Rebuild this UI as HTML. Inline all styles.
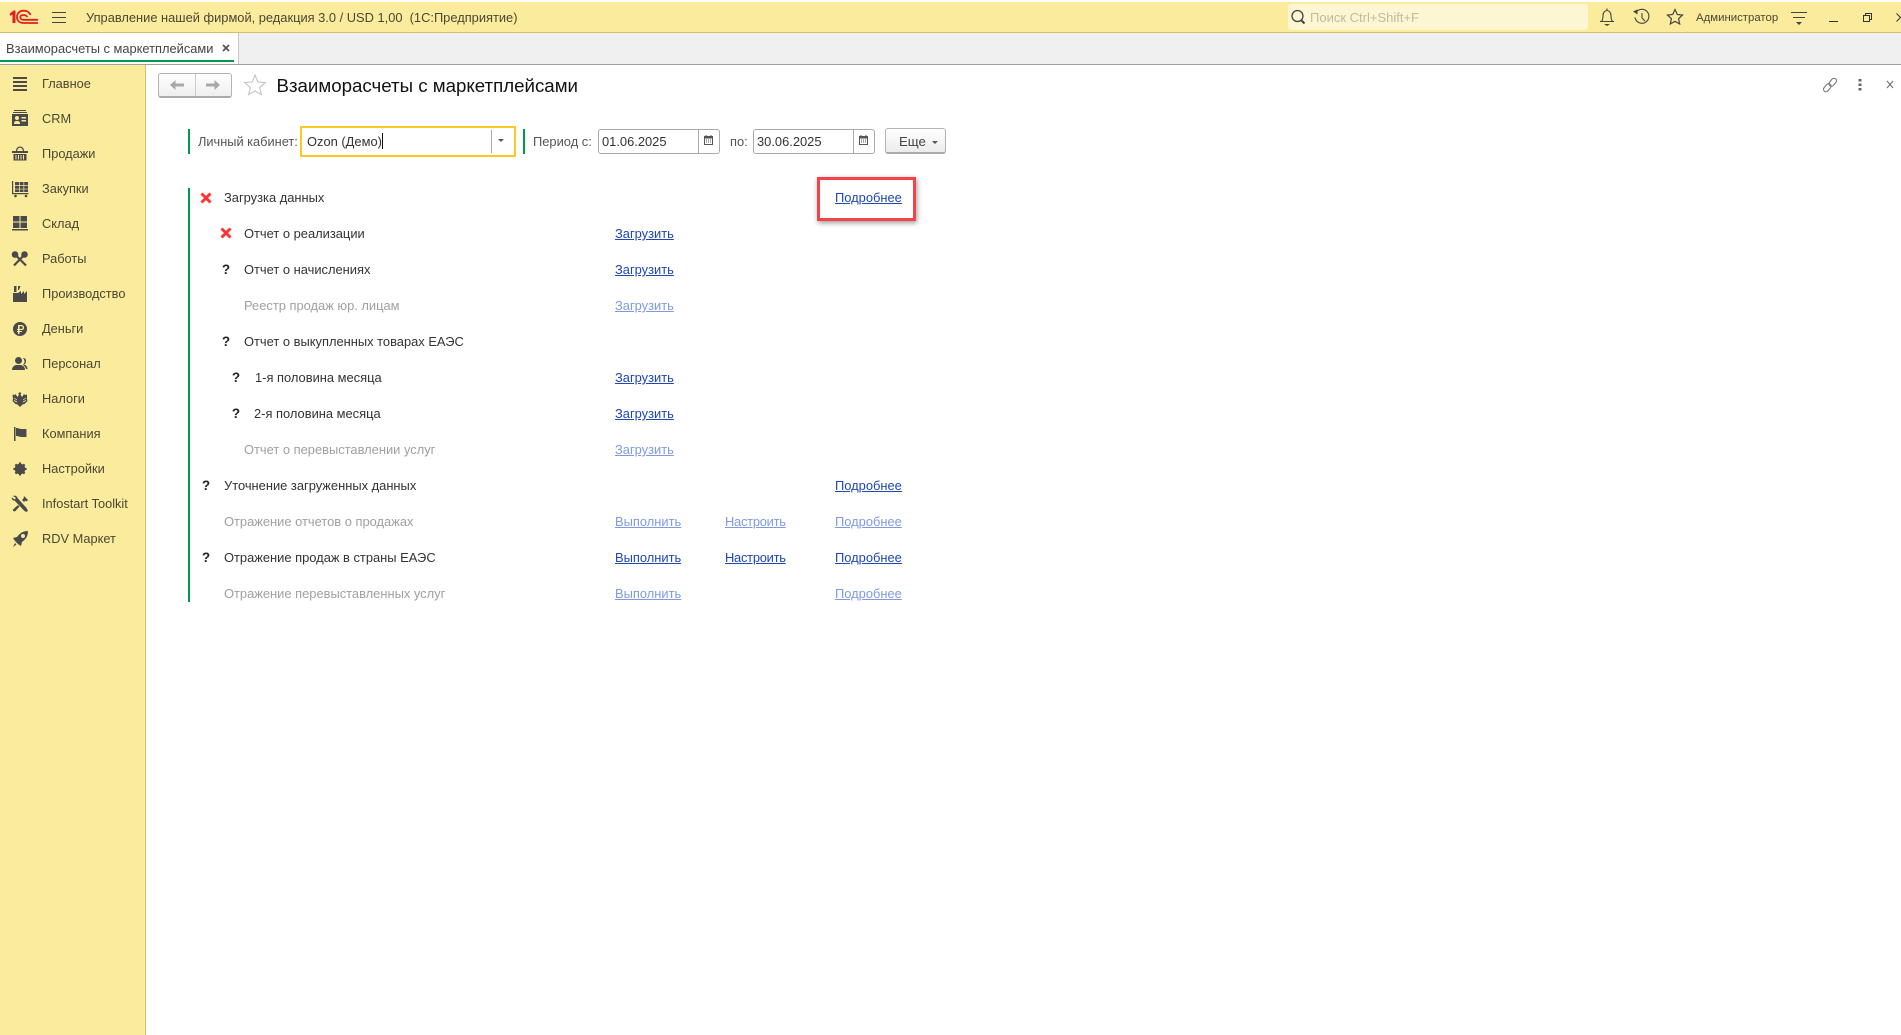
<!DOCTYPE html>
<html lang="ru"><head><meta charset="utf-8"><title>Взаиморасчеты с маркетплейсами</title>
<style>
html,body{margin:0;padding:0;background:#fff}
body{width:1901px;height:1035px;position:relative;overflow:hidden;font-family:"Liberation Sans",Arial,sans-serif;font-size:12.9px;color:#333}
.a,.t,.l,svg{position:absolute}
.t,.l{white-space:nowrap;line-height:16px;height:16px}
.l{color:#1f47b5;text-decoration:underline}
.g{color:#a0a0a0}
.ld{color:#7f9be0}
.n{color:#4a4632;left:42px;font-size:12.8px}
svg.i{left:11px;width:18px;height:18px;fill:#4a4a4a}
.gb{background:#009a4a;width:2px}
.q{font-weight:bold;font-size:13.5px;color:#222;width:12px;text-align:center}
.d{border:1px solid #aaa;border-radius:3px;box-sizing:border-box;background:#fff}
.ns{letter-spacing:-.25px}
</style></head><body>
<div class="a" style="left:0;top:2px;width:1901px;height:30px;background:#fbec9d;border-bottom:1px solid #d4bd6f"></div>
<svg style="left:9px;top:9px" width="30" height="16" viewBox="0 0 30 16"><path d="M0.500 5l4-3.500h2V14H3.500V5.500L1.500 7z" fill="#e21f1f"/><path d="M21.500 6C20.500 3 17.500 1.700 14.500 1.700 10.500 1.700 8 4.300 8 8s2.500 6 6.500 6H29M18.500 8C17.500 6.700 16 6 14.500 6 12.500 6 11.300 6.700 11.300 8.200S12.500 10.800 14.500 10.800H29" stroke="#e21f1f" stroke-width="1.800" fill="none"/></svg>
<div class="a" style="left:52px;top:12px;width:14px;height:1px;background:#444"></div>
<div class="a" style="left:52px;top:17px;width:14px;height:1px;background:#444"></div>
<div class="a" style="left:52px;top:22px;width:14px;height:1px;background:#444"></div>
<div class="t" style="left:86px;top:10px;color:#4a4632;font-size:12.86px">Управление нашей фирмой, редакция 3.0 / USD 1,00&nbsp; (1С:Предприятие)</div>
<div class="a" style="left:1288px;top:4px;width:300px;height:26px;background:#fdf6d3;border-radius:3px"></div>
<svg style="left:1290px;top:9px" width="16" height="16" viewBox="0 0 16 16" fill="none" stroke="#444"><circle cx="7.500" cy="7" r="5.500" stroke-width="1.300"/><path d="M11 11l3.500 3.500" stroke-width="2"/></svg>
<div class="t" style="left:1310px;top:10px;color:#c0bba0;font-size:13px">Поиск Ctrl+Shift+F</div>
<svg style="left:1598px;top:7px" width="18" height="20" viewBox="0 0 18 20" fill="none" stroke="#444" stroke-width="1.100"><path d="M2 14.500h14M3.500 14.500c1.500-2 1.500-4 1.500-6 0-3 2-5 4-5s4 2 4 5c0 2 0 4 1.500 6M9 1.500v2"/><path d="M6 17h6l-3 2z" fill="#444" stroke="none"/></svg>
<svg style="left:1632px;top:8px" width="19" height="18" viewBox="0 0 19 18" fill="none" stroke="#444" stroke-width="1.100"><path d="M4 4.500A7 7 0 1 1 3 9.500M10 5v5l3 3"/><path d="M1 3.500l4.500-2v5z" fill="#444" stroke="none"/></svg>
<svg style="left:1666px;top:8px" width="18" height="18" viewBox="0 0 18 18" fill="none" stroke="#444" stroke-width="1.200"><path d="M9 1.500l2.300 5 5.200.6-3.900 3.600 1.100 5.300L9 13.300 4.300 16l1.100-5.300L1.500 7.100l5.200-.6z"/></svg>
<div class="t" style="left:1696px;top:10px;color:#4a4632;font-size:11.4px">Администратор</div>
<svg style="left:1791px;top:11px" width="16" height="15" viewBox="0 0 16 15" fill="#444"><rect x="0" y="1" width="16" height="1"/><rect x="2" y="6" width="12" height="1"/><path d="M5 11h6l-3 3z"/></svg>
<div class="a" style="left:1829px;top:21px;width:9px;height:1px;background:#333"></div>
<svg style="left:1863px;top:13px" width="9" height="9" viewBox="0 0 9 9" fill="none" stroke="#333"><path d="M.5 2.500h6v6h-6zM2.500 2.500v-2h6v6h-2"/></svg>
<svg style="left:1896px;top:13px" width="5" height="9" viewBox="0 0 5 9" fill="none" stroke="#333"><path d="M.5.500l4 4-4 4"/></svg>

<div class="a" style="left:0;top:33px;width:1901px;height:31px;background:#f0f0f0;border-bottom:1px solid #a0a0a0"></div>
<div class="a" style="left:0;top:33px;width:238px;height:31px;background:#fff;border-right:1px solid #c8c8c8"></div>
<div class="a" style="left:0;top:60px;width:234px;height:2px;background:#009a4a"></div>
<div class="t" style="left:6px;top:41px;color:#444;font-size:12.87px">Взаиморасчеты с маркетплейсами</div>
<svg style="left:222px;top:44px" width="8" height="8" viewBox="0 0 8 8" stroke="#555" stroke-width="1.800"><path d="M1 1l6 6M7 1l-6 6"/></svg>

<div class="a" style="left:0;top:65px;width:145px;height:970px;background:#fbec9d;border-right:1px solid #d4bd6f"></div>
<svg class="i" style="top:75px" viewBox="0 0 18 18"><path d="M2 2h14v2H2zM2 6h14v2H2zM2 10h14v2H2zM2 14h14v2H2z"/></svg>
<div class="t n" style="top:76px">Главное</div>
<svg class="i" style="top:109px" viewBox="0 0 18 18"><path d="M3 1h12v1H3zM2 3h14v1H2z"/><path fill-rule="evenodd" d="M1 5h16v12H1zM10.500 8v1.500H15V8zM10.500 11v1.500H15V11z"/><circle cx="6" cy="9" r="2" fill="#fbec9d"/><path d="M3 15c0-2.500 1-3 3-3s3 .5 3 3z" fill="#fbec9d"/></svg>
<div class="t n" style="top:111px">CRM</div>
<svg class="i" style="top:145px" viewBox="0 0 18 18"><path d="M5 6c0-3 2-4.500 4-4.500S13 3 13 6h-1.200c0-2-1.300-3.300-2.800-3.300S6.200 4 6.200 6z"/><path fill-rule="evenodd" d="M1 6h16v2H1zM2.500 9h13v6.500h-13zM4.500 10v4.500h1V10zM7 10v4.500h1V10zM9.500 10v4.500h1V10zM12 10v4.500h1V10z"/></svg>
<div class="t n" style="top:146px">Продажи</div>
<svg class="i" style="top:180px" viewBox="0 0 18 18"><path d="M1 1h1.200v12H17.500v1.200H1z"/><path d="M4 2h4v3H4zM8.700 2h3.800v3H8.700zM13.200 2h3.800v3h-3.800zM4 5.700h4v3H4zM8.700 5.700h3.800v3H8.700zM13.200 5.700h3.800v3h-3.800zM4 9.400h4v2.600H4zM8.700 9.400h3.800v2.600H8.700zM13.200 9.400h3.800v2.600h-3.800z"/><circle cx="4.500" cy="16" r="1.300"/><circle cx="15" cy="16" r="1.300"/></svg>
<div class="t n" style="top:181px">Закупки</div>
<svg class="i" style="top:214px" viewBox="0 0 18 18"><path d="M2 2h6.500v5.500H2zM9.500 2H16v5.500H9.500zM2 8.500h6.500V14H2zM9.500 8.500H16V14H9.500zM1 15h16v1.500H1z"/></svg>
<div class="t n" style="top:216px">Склад</div>
<svg class="i" style="top:250px" viewBox="0 0 18 18" fill="none"><g stroke="#4a4a4a"><circle cx="4" cy="4.500" r="2.500" stroke-width="1.600"/><path d="M6 6.500l9 9" stroke-width="2.200"/><circle cx="13.500" cy="4.500" r="2.500" stroke-width="1.600"/><path d="M11.700 6.500L3 15.500" stroke-width="2.200"/></g></svg>
<div class="t n" style="top:251px">Работы</div>
<svg class="i" style="top:285px" viewBox="0 0 18 18"><path d="M3 1h2.500v6H3zM7 1h2.500L8 5H7z"/><path d="M2 8l5 0 3-2v3l3-3v3l3-3v11H2z"/></svg>
<div class="t n" style="top:286px">Производство</div>
<svg class="i" style="top:320px" viewBox="0 0 18 18"><path fill-rule="evenodd" d="M9 2a7 7 0 1 1 0 14A7 7 0 0 1 9 2zM7 5v4H6v1h1v1H6v1h1v2h1.500v-2H11v-1H8.500v-1H10.500c2 0 2.500-1 2.500-2.500S12 5 10.500 5zM8.500 6.200h2c1 0 1.200.5 1.200 1.300s-.3 1.400-1.200 1.400h-2z"/></svg>
<div class="t n" style="top:321px">Деньги</div>
<svg class="i" style="top:355px" viewBox="0 0 18 18"><circle cx="7.500" cy="5.500" r="3.500"/><path d="M1 15c0-3 2-4.500 4-5h5c2 .5 4 2 4 5z"/><path d="M12 3c2 0 3 1 3 3s-1 3-2 3.500c2 .5 3.500 2 3.500 4.500h-1.500c-.5-2-1.500-3-3-4 1-1 1.500-2.500 1.500-3.500S13 4 12 3z"/></svg>
<div class="t n" style="top:356px">Персонал</div>
<svg class="i" style="top:390px" viewBox="0 0 18 18"><path d="M9 2l1.300 1.500-.8 1L11 7l2-3 1 1 2-.5L16 9l.5 2-3 3-2 .5L9 17l-2.500-2.500-2-.5-3-3 .5-2-.5-4.500 2 .5 1-1 2 3 1.500-2.500-.8-1z"/><path d="M3 8l3 2M3 10.500l3 1.500M15 8l-3 2M15 10.500L12 12" stroke="#fbec9d" stroke-width=".7"/></svg>
<div class="t n" style="top:391px">Налоги</div>
<svg class="i" style="top:425px" viewBox="0 0 18 18"><path d="M3 2h1.500v14H3zM5 3c3 0 3 1 6 1h4.500v8H11c-3 0-3-1-6-1z"/></svg>
<div class="t n" style="top:426px">Компания</div>
<svg class="i" style="top:460px" viewBox="0 0 18 18" fill="none" stroke="#4a4a4a"><circle cx="9" cy="9" r="4" stroke-width="2.600"/><path d="M9 2.500v3M9 12.500v3M2.500 9h3M12.500 9h3M4.400 4.400l2 2M11.600 11.600l2 2M13.600 4.400l-2 2M6.400 11.600l-2 2" stroke-width="2.200"/></svg>
<div class="t n" style="top:461px">Настройки</div>
<svg class="i" style="top:495px" viewBox="0 0 18 18"><path d="M2 1c2-1 4 0 4.500 2l9 10 1.500 3-2 1-2.500-2-9-9.500C2 6 0 4 1 2.500l2.500 2L5 3z"/><path d="M13 1l4 4-1.500 1.500-1-1-1.500 1.500-2-2 1.500-1.500zM7 10l1.500 1.500-4 4.500c-1 1-3 0-2.500-1.500z"/></svg>
<div class="t n" style="top:496px">Infostart Toolkit</div>
<svg class="i" style="top:530px" viewBox="0 0 18 18"><path fill-rule="evenodd" d="M17 1c0 5-2 8-6 11l-1 4-3-2-3-3-2-3 4-1c3-4 6-6 11-6zM12 4a2 2 0 1 0 0 4 2 2 0 0 0 0-4z"/><path d="M4 13l1.500 1.500L2 17z"/></svg>
<div class="t n" style="top:531px">RDV Маркет</div>

<div class="a d" style="left:158px;top:73px;width:74px;height:25px;background:linear-gradient(#fff,#efefef);border-color:#b4b4b4;border-bottom:2px solid #aaa"></div>
<div class="a" style="left:195px;top:74px;width:1px;height:22px;background:#ccc"></div>
<svg style="left:169px;top:79px" width="16" height="12" viewBox="0 0 16 12" fill="#a8a8a8"><path d="M1 6l5.500-5v3.500H15v3H6.500V11z"/></svg>
<svg style="left:205px;top:79px" width="16" height="12" viewBox="0 0 16 12" fill="#a8a8a8"><path d="M15 6L9.500 1v3.500H1v3h8.500V11z"/></svg>
<svg style="left:243px;top:73px" width="24" height="24" viewBox="0 0 24 24" fill="none" stroke="#c4c4c4" stroke-width="1.100"><path d="M12 2l2.900 7 7.500.6-5.700 4.900 1.800 7.300L12 18l-6.500 3.800 1.800-7.300L1.600 9.600 9.100 9z"/></svg>
<div class="t" style="left:276.500px;top:74px;line-height:24px;height:24px;font-size:18.700px;color:#111">Взаиморасчеты с маркетплейсами</div>
<svg style="left:1822px;top:77px" width="16" height="16" viewBox="0 0 16 16" fill="none" stroke="#777" stroke-width="1.100"><rect x="-4.500" y="-2.500" width="9" height="5" rx="2.500" transform="translate(10.700 5.300) rotate(-50)"/><rect x="-4.500" y="-2.500" width="9" height="5" rx="2.500" transform="translate(5.300 10.700) rotate(-50)"/></svg>
<svg style="left:1858px;top:79px" width="4" height="12" viewBox="0 0 4 12" fill="#666"><rect x="0.500" width="3" height="2.500"/><rect x="0.500" y="4.500" width="3" height="2.500"/><rect x="0.500" y="9" width="3" height="2.500"/></svg>
<svg style="left:1886px;top:80px" width="8" height="9" viewBox="0 0 8 9" stroke="#666"><path d="M1 1l6 7M7 1L1 8"/></svg>

<div class="a gb" style="left:188px;top:129px;height:25px"></div>
<div class="t" style="left:198px;top:134px;color:#555;font-size:12.8px">Личный кабинет:</div>
<div class="a" style="left:300px;top:126px;width:216px;height:31px;box-sizing:border-box;border:2px solid #fdc823;background:#fff"></div>
<div class="t" style="left:307px;top:134px;color:#333">Ozon (Демо)</div>
<div class="a" style="left:382px;top:133px;width:1px;height:16px;background:#111"></div>
<div class="a" style="left:491px;top:130px;width:1px;height:23px;background:#aaa"></div>
<div class="a" style="left:498px;top:139px;border:3px solid transparent;border-top:3px solid #555;border-bottom:0"></div>
<div class="a gb" style="left:523px;top:129px;height:25px"></div>
<div class="t" style="left:533px;top:134px;color:#555">Период с:</div>
<div class="a d" style="left:598px;top:129px;width:122px;height:25px"></div>
<div class="a" style="left:698px;top:130px;width:1px;height:23px;background:#aaa"></div>
<div class="t" style="left:602px;top:134px;color:#333">01.06.2025</div>
<svg style="left:704px;top:135px" width="9" height="10" viewBox="0 0 9 10" fill="#555"><path fill-rule="evenodd" d="M0 1h1.500V0h1v1h4V0h1v1H9v9H0zM1 3.500V9h7V3.500z"/><path d="M2 4.500h1v1H2zM4 4.500h1v1H4zM6 4.500h1v1H6zM2 6.500h1v1H2zM4 6.500h1v1H4zM6 6.500h1v1H6z"/></svg>
<div class="t" style="left:730px;top:134px;color:#555">по:</div>
<div class="a d" style="left:753px;top:129px;width:122px;height:25px"></div>
<div class="a" style="left:853px;top:130px;width:1px;height:23px;background:#aaa"></div>
<div class="t" style="left:757px;top:134px;color:#333">30.06.2025</div>
<svg style="left:859px;top:135px" width="9" height="10" viewBox="0 0 9 10" fill="#555"><path fill-rule="evenodd" d="M0 1h1.500V0h1v1h4V0h1v1H9v9H0zM1 3.500V9h7V3.500z"/><path d="M2 4.500h1v1H2zM4 4.500h1v1H4zM6 4.500h1v1H6zM2 6.500h1v1H2zM4 6.500h1v1H4zM6 6.500h1v1H6z"/></svg>
<div class="a d" style="left:885px;top:128px;width:61px;height:26px;background:linear-gradient(#fff,#ececec);border-color:#b4b4b4;border-bottom:2px solid #aaa"></div>
<div class="t" style="left:899px;top:134px;color:#444;font-size:13.2px">Еще</div>
<div class="a" style="left:932px;top:141px;border:3px solid transparent;border-top:3px solid #555;border-bottom:0"></div>

<div class="a gb" style="left:188px;top:188px;height:414px"></div>

<svg style="left:200px;top:192px" width="12" height="12" viewBox="0 0 12 12" stroke="#f33" stroke-width="3"><path d="M1.500 1.500l9 9M10.500 1.500l-9 9"/></svg>
<div class="t" style="left:224px;top:190px">Загрузка данных</div>
<div class="a" style="left:817px;top:177px;width:99px;height:44px;box-sizing:border-box;border:3px solid #f44248;box-shadow:1px 2px 5px rgba(0,0,0,.4);background:#fff"></div>
<div class="t l" style="left:835px;top:190px">Подробнее</div>

<svg style="left:220px;top:227px" width="12" height="12" viewBox="0 0 12 12" stroke="#f33" stroke-width="3"><path d="M1.500 1.500l9 9M10.500 1.500l-9 9"/></svg>
<div class="t" style="left:244px;top:226px">Отчет о реализации</div>
<div class="l" style="left:615px;top:226px">Загрузить</div>

<div class="t q" style="left:220px;top:262px">?</div>
<div class="t" style="left:244px;top:262px">Отчет о начислениях</div>
<div class="l" style="left:615px;top:262px">Загрузить</div>

<div class="t g" style="left:244px;top:298px">Реестр продаж юр. лицам</div>
<div class="l ld" style="left:615px;top:298px">Загрузить</div>

<div class="t q" style="left:220px;top:334px">?</div>
<div class="t" style="left:244px;top:334px">Отчет о выкупленных товарах ЕАЭС</div>

<div class="t q" style="left:230px;top:370px">?</div>
<div class="t" style="left:255px;top:370px">1-я половина месяца</div>
<div class="l" style="left:615px;top:370px">Загрузить</div>

<div class="t q" style="left:230px;top:406px">?</div>
<div class="t" style="left:254px;top:406px">2-я половина месяца</div>
<div class="l" style="left:615px;top:406px">Загрузить</div>

<div class="t g" style="left:244px;top:442px">Отчет о перевыставлении услуг</div>
<div class="l ld" style="left:615px;top:442px">Загрузить</div>

<div class="t q" style="left:200px;top:478px">?</div>
<div class="t" style="left:224px;top:478px">Уточнение загруженных данных</div>
<div class="l" style="left:835px;top:478px">Подробнее</div>

<div class="t g" style="left:224px;top:514px">Отражение отчетов о продажах</div>
<div class="l ld" style="left:615px;top:514px">Выполнить</div>
<div class="l ld ns" style="left:725px;top:514px">Настроить</div>
<div class="l ld" style="left:835px;top:514px">Подробнее</div>

<div class="t q" style="left:200px;top:550px">?</div>
<div class="t" style="left:224px;top:550px">Отражение продаж в страны ЕАЭС</div>
<div class="l" style="left:615px;top:550px">Выполнить</div>
<div class="l ns" style="left:725px;top:550px">Настроить</div>
<div class="l" style="left:835px;top:550px">Подробнее</div>

<div class="t g" style="left:224px;top:586px">Отражение перевыставленных услуг</div>
<div class="l ld" style="left:615px;top:586px">Выполнить</div>
<div class="l ld" style="left:835px;top:586px">Подробнее</div>
</body></html>
